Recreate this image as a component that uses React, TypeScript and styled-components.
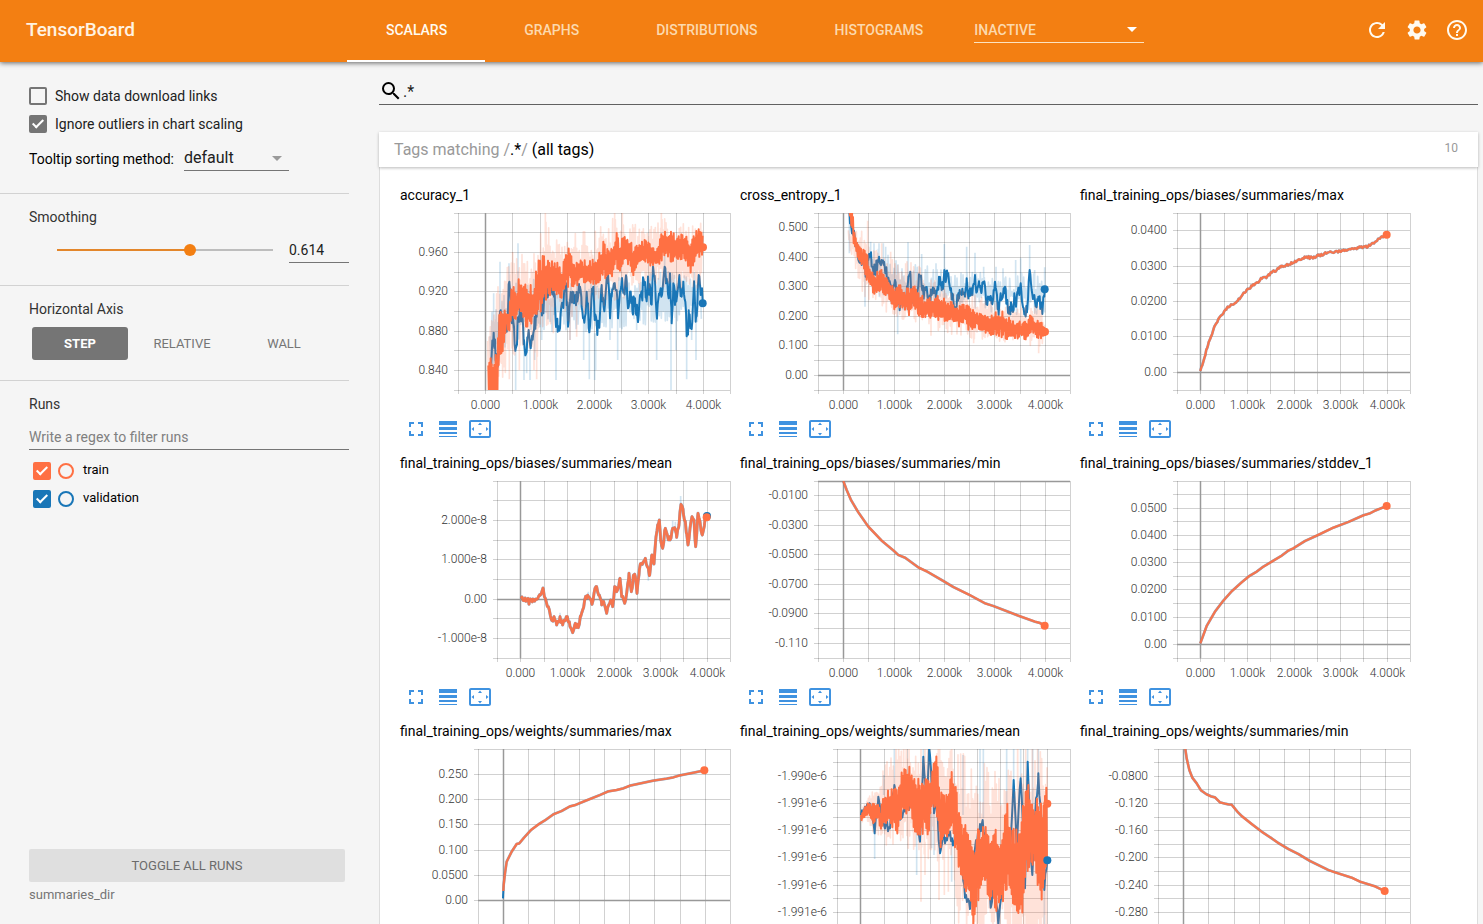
import React, { useId, useState } from 'react';
import styled, { createGlobalStyle, css } from 'styled-components';
import {
  MdFullscreen,
  MdHelpOutline,
  MdLineWeight,
  MdRefresh,
  MdSearch,
  MdSettings,
  MdSettingsOverscan,
} from 'react-icons/md';

const ORANGE = '#f37f12';
const TRAIN = '#ff7043';
const VALIDATION = '#1976b7';

const GlobalStyle = createGlobalStyle`
  *, *::before, *::after { box-sizing: border-box; }
  body {
    margin: 0;
    background: #f5f5f5;
    color: #000;
    font-family: Roboto, "Liberation Sans", sans-serif;
    font-size: 14px;
    line-height: 20px;
  }
  button, input, select { font: inherit; color: inherit; }
`;

/* ---------- page frame ---------- */

const Page = styled.div`
  display: flex;
  flex-direction: column;
  height: 100vh;
`;

const Header = styled.header`
  position: relative;
  z-index: 1;
  display: flex;
  flex: none;
  align-items: center;
  height: 62px;
  padding-right: 6px;
  background: ${ORANGE};
  color: #fff;
  box-shadow: 0 1px 5px rgba(0, 0, 0, 0.6);
  & > :not(nav) { margin-bottom: 2px; }
`;

const Brand = styled.h1`
  flex: none;
  width: 347px;
  margin: 0;
  padding-left: 26px;
  font-size: 19px;
  font-weight: 500;
  line-height: 24px;
  color: #fff3e2;
`;

const Tabs = styled.nav`
  display: flex;
  height: 100%;
`;

const Tab = styled.a<{ $active?: boolean }>`
  display: flex;
  align-items: center;
  padding: 0 38px 0 39px;
  border-bottom: 2px solid ${(p) => (p.$active ? '#fff' : 'transparent')};
  color: ${(p) => (p.$active ? '#fffaf0' : '#fcd9ae')};
  font-weight: 500;
  text-decoration: none;
  text-transform: uppercase;
`;

const SelectWrap = styled.span`
  position: relative;
  display: inline-flex;
  &::after {
    content: '';
    position: absolute;
    right: 7px;
    top: 50%;
    margin-top: -3px;
    border: 5px solid transparent;
    border-top-color: currentColor;
    border-bottom: 0;
    pointer-events: none;
  }
`;

const InactiveWrap = styled(SelectWrap)`
  margin-left: 13px;
  width: 170px;
`;

const InactiveSelect = styled.select`
  appearance: none;
  width: 100%;
  height: 25px;
  padding: 0;
  border: 0;
  border-bottom: 1px solid #fce3c0;
  border-radius: 0;
  background: transparent;
  color: #fcd9ae;
  font-weight: 500;
`;

const HeaderActions = styled.div`
  display: flex;
  margin-left: auto;
`;

const HeaderButton = styled.button`
  display: flex;
  align-items: center;
  justify-content: center;
  width: 40px;
  height: 40px;
  padding: 0;
  border: 0;
  background: transparent;
  color: #fffaf0;
  font-size: 24px;
`;

const Content = styled.div`
  display: flex;
  flex: 1;
  min-height: 0;
`;

/* ---------- sidebar ---------- */

const Sidebar = styled.aside`
  display: flex;
  flex: none;
  flex-direction: column;
  width: 349px;
  padding-top: 20px;
`;

const Section = styled.section<{ $height?: number }>`
  display: flex;
  flex-direction: column;
  height: ${(p) => (p.$height ? `${p.$height}px` : 'auto')};
  padding-left: 29px;
  ${(p) => p.$height && css`border-bottom: 1px solid #d2d2d2;`}
`;

const SectionTitle = styled.h2`
  margin: 0;
  padding-top: 13px;
  font-size: 14px;
  font-weight: 400;
  line-height: 20px;
  color: #333;
`;

const CheckRow = styled.label`
  display: flex;
  align-items: center;
  gap: 8px;
  height: 28px;
  color: #212121;
`;

const Checkbox = styled.input.attrs({ type: 'checkbox' })<{ $color: string }>`
  appearance: none;
  position: relative;
  flex: none;
  width: 18px;
  height: 18px;
  margin: 0;
  border: 2px solid ${(p) => p.$color};
  border-radius: 2px;
  &:checked { background: ${(p) => p.$color}; }
  &:checked::after {
    content: '';
    position: absolute;
    left: 4px;
    top: 0;
    width: 6px;
    height: 11px;
    border: solid #fff;
    border-width: 0 2px 2px 0;
    transform: rotate(45deg);
  }
`;

const SortRow = styled.div`
  display: flex;
  align-items: center;
  gap: 10px;
  margin-top: 8px;
`;

const SortWrap = styled(SelectWrap)`
  width: 105px;
  &::after { border-top-color: #9a9a9a; }
`;

const SortSelect = styled.select`
  appearance: none;
  width: 100%;
  height: 25px;
  padding: 0;
  border: 0;
  border-bottom: 1px solid #757575;
  border-radius: 0;
  background: transparent;
  color: #212121;
  font-size: 16px;
`;

const SliderRow = styled.div`
  display: flex;
  align-items: center;
  gap: 10px;
  margin-top: 11px;
  padding-left: 22px;
`;

const Slider = styled.input.attrs({ type: 'range' })<{ $percent: number }>`
  appearance: none;
  width: 228px;
  height: 12px;
  margin: 0 0 2px;
  background: transparent;
  &::-webkit-slider-runnable-track {
    height: 12px;
    background: linear-gradient(
        to right,
        #e3862b ${(p) => p.$percent}%,
        #bdbdbd ${(p) => p.$percent}%
      )
      center / calc(100% - 12px) 2px no-repeat;
  }
  &::-webkit-slider-thumb {
    appearance: none;
    width: 12px;
    height: 12px;
    border-radius: 50%;
    background: ${ORANGE};
  }
`;

const SliderValue = styled.input.attrs({ type: 'number' })`
  appearance: textfield;
  width: 60px;
  height: 25px;
  padding: 0;
  border: 0;
  border-bottom: 1px solid #757575;
  background: transparent;
  color: #212121;
  &::-webkit-inner-spin-button { appearance: none; }
`;

const AxisButtons = styled.div`
  display: grid;
  grid-template-columns: repeat(3, 96px);
  gap: 6px;
  margin-top: 8px;
  padding-left: 3px;
`;

const AxisButton = styled.button<{ $active?: boolean }>`
  height: 33px;
  padding: 0;
  border: 0;
  border-radius: 3px;
  background: ${(p) => (p.$active ? '#757575' : 'transparent')};
  color: ${(p) => (p.$active ? '#fff' : '#757575')};
  font-size: 13px;
  font-weight: ${(p) => (p.$active ? 700 : 400)};
`;

const RegexInput = styled.input`
  width: 100%;
  height: 25px;
  margin-top: 11px;
  padding: 0;
  border: 0;
  border-bottom: 1px solid #757575;
  background: transparent;
  &::placeholder { color: #808080; opacity: 1; }
`;

const RunList = styled.ul`
  margin: 7px 0 0;
  padding: 0 0 0 4px;
  list-style: none;
`;

const RunRow = styled.li`
  display: flex;
  align-items: center;
  height: 28px;
`;

const RunRadio = styled.input.attrs({ type: 'radio' })<{ $color: string }>`
  appearance: none;
  width: 16px;
  height: 16px;
  margin: 0 9px 0 7px;
  border: 2px solid ${(p) => p.$color};
  border-radius: 50%;
`;

const RunName = styled.label`
  padding-bottom: 2px;
  font-size: 13px;
`;

const SidebarFooter = styled.div`
  display: flex;
  flex-direction: column;
  gap: 3px;
  margin-top: auto;
  padding: 0 4px 19px 29px;
  color: #757575;
  font-size: 13px;
`;

const ToggleButton = styled.button`
  height: 33px;
  border: 0;
  border-radius: 2px;
  background: #dfdfdf;
  color: #6b6b6b;
`;

/* ---------- main pane ---------- */

const Main = styled.main`
  display: flex;
  flex: 1;
  flex-direction: column;
  min-width: 0;
  padding: 16px 5px 0 30px;
  overflow-y: auto;
  scrollbar-width: none;
`;

const SearchBar = styled.label`
  display: flex;
  flex: none;
  align-items: center;
  height: 27px;
  border-bottom: 1px solid #616161;
  font-size: 24px;
`;

const SearchInput = styled.input`
  flex: 1;
  min-width: 0;
  height: 24px;
  padding: 0;
  border: 0;
  background: transparent;
  color: #212121;
  font-size: 16px;
`;

const PaneHeader = styled.header`
  position: relative;
  display: flex;
  flex: none;
  justify-content: space-between;
  height: 35px;
  margin-top: 27px;
  padding: 8px 20px 0 15px;
  background: #fff;
  box-shadow: 0 1px 3px rgba(0, 0, 0, 0.28);
`;

const PaneTitle = styled.h2`
  margin: 0;
  font-size: 16px;
  font-weight: 400;
  line-height: 20px;
`;

const Muted = styled.span`
  color: #999;
`;

const PaneCount = styled.span`
  font-size: 12px;
  line-height: 16px;
  color: #999;
`;

const CardGrid = styled.div`
  display: flex;
  flex: 1 0 auto;
  flex-wrap: wrap;
  gap: 12px 10px;
  padding: 18px 19px 20px 20px;
  border: solid #ddd;
  border-width: 0 1px;
  background: #fff;
`;

const Card = styled.article`
  width: 330px;
`;

const CardTitle = styled.h3`
  margin: 0 0 8px;
  font-size: 14px;
  font-weight: 400;
  line-height: 20px;
  white-space: nowrap;
`;

const Plot = styled.svg`
  display: block;
  width: 330px;
  height: 204px;
  overflow: visible;
  text {
    font-size: 12px;
    font-weight: 300;
    fill: #333;
  }
`;

const CardTools = styled.div`
  display: flex;
  gap: 8px;
  padding-left: 4px;
`;

const CardTool = styled.button`
  display: flex;
  width: 24px;
  height: 24px;
  padding: 0;
  border: 0;
  background: transparent;
  color: #3f92e0;
  font-size: 24px;
`;

/* ---------- chart data ---------- */

type Pt = [number, number];
type Envelope = [number, number, number];

interface Trace {
  color: string;
  path: string;
  width: number;
  opacity?: number;
}

interface ChartSpec {
  title: string;
  left: number;
  rows: number;
  zeroRow?: number;
  firstLabelRow: number;
  labelEvery?: number;
  labels: string[];
  origin: Pt;
  traces: Trace[];
  dots: { color: string; at: Pt }[];
}

const random = (seed: number) => () => {
  seed = (seed * 1664525 + 1013904223) % 4294967296;
  return seed / 4294967296;
};

const pairs = (s: string): Pt[] => s.trim().split(/\s+/).map((p) => p.split(',').map(Number) as Pt);
const triples = (s: string): Envelope[] =>
  s.trim().split(/\s+/).map((p) => p.split(',').map(Number) as Envelope);

const toPath = (pts: Pt[]) => 'M' + pts.map(([x, y]) => `${x.toFixed(1)} ${y.toFixed(1)}`).join('L');

/* Straight segments through the samples, roughened by `amp`. */
const line = (s: string, amp = 0, seed = 7, step = 3) => {
  const src = pairs(s);
  if (!amp) return toPath(src);
  const rnd = random(seed);
  const out: Pt[] = [src[0]];
  for (let i = 1; i < src.length; i++) {
    const [x0, y0] = src[i - 1];
    const [x1, y1] = src[i];
    for (let x = x0 + step; x < x1; x += step) {
      const t = (x - x0) / (x1 - x0);
      out.push([x, y0 + (y1 - y0) * t + (rnd() - 0.5) * 2 * amp]);
    }
    out.push(src[i]);
  }
  return toPath(out);
};

/* A noisy line that swings between an upper and a lower envelope. */
const swing = (s: string, seed: number, step = 2, floor = 0.25) => {
  const src = triples(s);
  const rnd = random(seed);
  const out: Pt[] = [];
  let up = false;
  for (let i = 1; i < src.length; i++) {
    const [x0, t0, b0] = src[i - 1];
    const [x1, t1, b1] = src[i];
    for (let x = x0; x < x1; x += step) {
      const k = (x - x0) / (x1 - x0);
      const top = t0 + (t1 - t0) * k;
      const bottom = b0 + (b1 - b0) * k;
      const reach = floor + (1 - floor) * rnd();
      up = !up;
      out.push([x, (top + bottom) / 2 + ((up ? -reach : reach) * (bottom - top)) / 2]);
    }
  }
  return toPath(out);
};

/* Separate vertical outliers: x, top, bottom. */
const spikes = (s: string) => triples(s).map(([x, a, b]) => `M${x} ${a}V${b}`).join('');

const raw = (color: string, path: string): Trace => ({ color, path, width: 5, opacity: 0.2 });
const smooth = (color: string, path: string): Trace => ({ color, path, width: 6 });

/* Both runs coincide: the train line covers the validation line. */
const joint = (path: string, width = 7): Trace[] => [
  { color: VALIDATION, path, width: width + 1, opacity: 0.55 },
  { color: TRAIN, path, width, opacity: 0.92 },
];

const charts: ChartSpec[] = [
  {
    title: 'accuracy_1',
    left: 58,
    rows: 9,
    firstLabelRow: 2,
    labels: ['0.960', '0.920', '0.880', '0.840'],
    origin: [30, 99],
    traces: [
      raw(VALIDATION, swing('300,400,600 330,330,520 380,290,480 450,290,460 600,300,460 760,280,440 937,270,430', 3, 3, 0.1) +
        spikes('311,340,460 330,245,400 357,250,400 384,190,330 377,500,630 402,440,600 410,500,580 420,480,600 434,400,540 455,400,480 498,420,600 540,420,480 581,420,540 598,440,598 614,460,600 617,460,570 660,400,480 683,400,540 740,400,450 800,400,540 843,420,630 858,400,510 890,440,598 905,420,480 918,400,540 790,220,290 824,200,270')),
      smooth(VALIDATION, line('298,600 303,560 311,458 318,540 323,560 330,395 340,420 350,455 358,305 364,420 372,440 377,506 386,410 395,400 402,480 410,516 416,450 422,505 432,450 440,410 446,340 452,350 460,400 467,330 475,340 485,330 492,350 500,430 503,455 508,452 512,400 518,370 524,320 528,310 534,440 540,365 548,335 556,345 563,360 570,320 575,380 583,428 590,335 598,457 604,360 610,320 614,420 622,465 630,400 635,315 641,380 646,350 654,282 658,350 660,415 665,350 672,310 680,330 684,415 690,335 696,294 702,335 710,305 714,385 722,335 727,390 735,355 742,408 748,370 755,345 761,300 768,350 775,310 783,372 790,268 797,355 801,416 808,345 814,350 820,300 824,260 828,310 832,305 836,355 840,280 845,430 850,310 855,375 862,340 868,285 875,350 880,305 886,365 890,469 897,410 903,443 908,390 913,320 918,412 926,285 932,345 936,325 939,370', 32, 11, 2)),
      raw(TRAIN, swing('293,430,630 310,340,630 330,300,630 360,190,600 390,220,500 440,215,560 460,100,480 500,180,400 540,130,440 600,160,400 640,130,380 680,99,370 720,130,340 780,140,330 810,99,320 850,130,330 900,130,330 937,130,330', 21, 2, 0.3) +
        spikes('358,440,598 388,420,570 432,430,570 440,430,598 490,380,460 540,350,480 560,350,470 466,99,200 674,99,200 697,99,180 814,99,160')),
      smooth(TRAIN, swing('295,520,680 298,510,680 305,530,680 315,500,680 322,490,680 326,400,590 340,388,520 350,395,440 358,385,465 365,315,430 380,320,430 388,280,410 400,285,425 410,300,460 430,320,420 438,265,415 450,225,405 470,230,355 490,240,350 505,230,365 515,280,375 522,210,330 540,186,320 550,250,335 570,240,305 600,240,320 620,235,320 640,185,300 660,210,305 680,158,260 690,190,300 700,150,250 720,175,260 730,205,292 750,185,245 775,175,255 790,195,260 800,205,265 815,145,245 830,160,225 843,140,250 860,175,245 875,148,240 890,165,250 905,180,285 922,145,220 930,150,240 940,170,215', 5, 2, 0.4)),
    ],
    dots: [
      { color: VALIDATION, at: [938, 370] },
      { color: TRAIN, at: [939, 202] },
    ],
  },
  {
    title: 'cross_entropy_1',
    left: 78,
    rows: 12,
    zeroRow: 11,
    firstLabelRow: 1,
    labels: ['0.500', '0.400', '0.300', '0.200', '0.100', '0.00'],
    origin: [15, 99],
    traces: [
      raw(VALIDATION, swing('400,200,330 450,200,370 520,250,400 600,260,390 700,270,390 800,280,400 930,280,410', 9, 3, 0.1) +
        spikes('343,100,220 407,185,260 390,280,380 417,190,250 432,190,250 445,190,250 452,200,270 488,380,463 519,187,290 560,222,300 603,250,300 628,192,290 695,200,300 720,218,300 746,260,320 783,260,320 804,265,320 842,240,320 857,235,310 884,195,300 899,270,320 929,262,330')),
      smooth(VALIDATION, line('343,90 345,130 355,165 364,190 372,245 385,230 392,290 400,240 406,225 412,260 420,270 430,245 440,240 447,245 452,270 458,300 470,340 480,300 486,340 495,380 505,340 512,365 520,290 526,275 530,350 540,350 548,330 552,283 556,290 560,320 567,345 573,330 580,360 590,345 597,325 603,355 608,320 613,300 620,330 626,300 628,270 634,295 640,280 646,330 655,360 663,385 670,340 680,345 690,350 695,295 700,355 705,325 712,345 720,285 726,335 733,320 740,335 746,310 752,345 757,375 763,350 770,370 776,330 780,305 786,345 791,405 797,340 804,345 810,320 815,370 822,395 830,375 836,390 838,340 843,380 848,340 853,345 857,310 862,370 870,400 877,380 884,270 890,330 898,345 903,370 910,350 918,375 923,385 928,350 929,328', 20, 13, 2)),
      raw(TRAIN, swing('340,130,200 360,150,260 380,150,330 398,160,370 420,210,380 440,200,390 460,220,400 500,240,420 540,250,440 600,290,450 700,340,475 800,370,490 880,380,495 910,370,515 930,400,490', 31, 2, 0.2) +
        spikes('398,122,260 440,190,280 467,215,300 512,250,320 588,400,467 716,440,490 911,460,520')),
      smooth(TRAIN, swing('343,80,110 352,85,150 358,150,210 372,200,250 385,205,260 398,225,320 410,262,340 425,275,355 440,260,345 455,285,345 470,300,380 480,315,390 500,315,395 520,325,410 535,310,375 550,335,405 565,350,425 580,350,420 600,345,415 625,350,430 650,365,430 670,370,445 690,375,425 700,375,455 720,390,445 740,400,450 760,410,465 780,395,465 800,385,475 820,410,478 840,420,475 860,425,480 875,425,480 885,395,455 900,415,470 920,420,482 932,440,475', 8, 2, 0.35)),
    ],
    dots: [
      { color: VALIDATION, at: [929, 328] },
      { color: TRAIN, at: [930, 455] },
    ],
  },
  {
    title: 'final_training_ops/biases/summaries/max',
    left: 97,
    rows: 10,
    zeroRow: 9,
    firstLabelRow: 1,
    labels: ['0.0400', '0.0300', '0.0200', '0.0100', '0.00'],
    origin: [15, 99],
    traces: joint(line('376,573 385,545 395,508 408,470 418,440 430,417 445,400 455,385 465,379 485,365 500,348 520,327 540,312 562,294 575,292 590,278 605,270 618,258 640,254 660,243 680,238 695,230 705,234 730,227 760,217 780,215 800,211 815,212 850,204 870,200 885,197 900,186 915,176 935,164', 4, 4)),
    dots: [{ color: TRAIN, at: [935, 164] }],
  },
  {
    title: 'final_training_ops/biases/summaries/mean',
    left: 97,
    rows: 9,
    zeroRow: 6,
    firstLabelRow: 2,
    labels: ['2.000e-8', '1.000e-8', '0.00', '-1.000e-8'],
    origin: [30, 93],
    traces: [
      raw(VALIDATION, spikes('510,488,510 595,425,440 775,360,392 848,212,240 856,215,240 872,138,170 880,170,200')),
      ...joint(line('393,446 405,444 418,456 428,447 440,448 450,436 460,418 466,445 475,470 486,512 492,500 500,525 510,500 518,525 526,512 532,500 540,530 548,548 556,520 565,533 572,500 578,480 584,450 594,438 606,463 612,430 620,410 628,435 635,465 642,460 650,490 656,465 662,450 668,470 674,410 680,425 690,385 695,440 704,460 710,430 717,370 724,425 731,375 736,380 741,430 748,360 754,340 760,335 766,325 772,350 779,375 786,315 792,342 798,260 803,225 808,210 812,270 818,295 826,235 832,255 840,270 848,235 856,240 860,262 867,225 873,163 880,190 886,215 890,250 894,285 900,235 906,200 912,210 917,290 924,190 930,215 937,255 945,208 950,200', 9, 6), 8),
    ],
    dots: [
      { color: VALIDATION, at: [951, 198] },
      { color: TRAIN, at: [950, 202] },
    ],
  },
  {
    title: 'final_training_ops/biases/summaries/min',
    left: 78,
    rows: 12,
    zeroRow: 0,
    firstLabelRow: 1,
    labels: ['-0.0100', '-0.0300', '-0.0500', '-0.0700', '-0.0900', '-0.110'],
    origin: [15, 93],
    traces: joint(line('325,93 335,120 348,150 370,187 400,230 440,272 476,302 490,315 510,323 550,352 575,364 625,393 655,411 700,433 750,460 775,468 850,497 900,515 915,519 929,527')),
    dots: [{ color: TRAIN, at: [929, 527] }],
  },
  {
    title: 'final_training_ops/biases/summaries/stddev_1',
    left: 97,
    rows: 13,
    zeroRow: 12,
    firstLabelRow: 2,
    labels: ['0.0500', '0.0400', '0.0300', '0.0200', '0.0100', '0.00'],
    origin: [15, 93],
    traces: joint(line('376,580 395,528 420,485 445,452 470,424 500,397 523,378 545,365 565,350 585,338 620,317 640,302 655,295 690,273 725,257 775,233 820,216 865,196 885,190 900,182 935,168')),
    dots: [{ color: TRAIN, at: [935, 168] }],
  },
  {
    title: 'final_training_ops/weights/summaries/max',
    left: 78,
    rows: 7,
    zeroRow: 6,
    firstLabelRow: 1,
    labelEvery: 1,
    labels: ['0.250', '0.200', '0.150', '0.100', '0.0500', '0.00'],
    origin: [30, 102],
    traces: [
      ...joint(line('340,528 341,510 345,475 350,440 365,410 380,387 388,385 402,368 423,345 447,327 465,316 490,298 515,288 540,274 556,270 580,260 605,250 630,240 655,229 680,225 700,220 720,212 790,197 830,191 850,187 870,181 915,172 943,166')),
      smooth(VALIDATION, 'M339 550L340 528'),
    ],
    dots: [{ color: TRAIN, at: [943, 166] }],
  },
  {
    title: 'final_training_ops/weights/summaries/mean',
    left: 97,
    rows: 13,
    firstLabelRow: 2,
    labels: ['-1.990e-6', '-1.991e-6', '-1.991e-6', '-1.991e-6', '-1.991e-6', '-1.991e-6'],
    origin: [15, 102],
    traces: [
      raw(VALIDATION, spikes('419,350,432 446,180,240 478,102,210 545,330,480 565,102,130 597,290,420 590,290,400 650,370,500 684,120,300 735,102,310 745,102,310 815,102,300 836,102,200 857,102,190 878,102,150 893,102,300 910,102,180 928,500,627')),
      smooth(VALIDATION, line('378,300 400,270 410,290 419,355 430,245 438,300 447,330 465,340 478,210 490,310 510,290 530,270 545,320 555,380 565,125 572,220 578,210 582,100 590,200 597,295 605,270 615,415 625,350 630,385 645,350 655,380 670,330 690,548 705,582 720,400 743,315 755,450 768,575 778,470 790,630 800,540 820,350 826,390 836,195 845,400 857,190 866,400 870,520 878,140 886,400 892,480 900,310 910,175 920,330 928,525 937,435', 20, 17)),
      raw(TRAIN, swing('380,285,320 400,235,320 430,225,390 450,130,400 475,110,400 500,80,380 540,80,420 600,80,440 655,80,450 665,100,640 720,140,700 820,140,700 850,60,800 937,60,800', 41, 2, 0.4) +
        spikes('558,380,560 570,380,480 612,380,555 628,380,540 640,370,530')),
      smooth(TRAIN, swing('378,295,320 390,275,305 400,258,305 415,265,325 430,270,305 436,280,360 447,240,330 460,225,330 475,210,345 490,230,360 500,145,310 515,165,310 528,145,305 540,195,360 555,185,380 570,180,340 580,190,380 590,170,290 600,95,290 608,150,340 617,230,405 630,240,360 640,235,380 650,160,350 663,210,420 672,280,460 683,310,540 700,350,545 715,380,630 730,325,560 750,320,530 765,370,560 780,340,590 800,360,590 815,220,540 830,350,570 850,310,650 860,260,640 870,180,510 885,220,450 900,290,460 910,210,530 920,250,590 932,205,500 938,230,460', 15, 2, 0.5)),
    ],
    dots: [
      { color: VALIDATION, at: [937, 436] },
      { color: TRAIN, at: [937, 266] },
    ],
  },
  {
    title: 'final_training_ops/weights/summaries/min',
    left: 78,
    rows: 13,
    firstLabelRow: 2,
    labels: ['-0.0800', '-0.120', '-0.160', '-0.200', '-0.240', '-0.280'],
    origin: [15, 102],
    traces: joint(line('330,95 335,130 343,165 352,188 365,205 378,226 395,238 408,244 420,247 435,262 450,266 460,268 470,269 488,291 500,303 530,327 560,350 590,370 610,384 640,402 670,417 705,438 760,465 780,472 830,488 855,500 900,514 929,528')),
    dots: [{ color: TRAIN, at: [929, 528] }],
  },
];

const PLOT_RIGHT = 330;
const PLOT_HEIGHT = 177;
const X_LABELS = ['0.000', '1.000k', '2.000k', '3.000k', '4.000k'];

function Chart({ spec }: { spec: ChartSpec }) {
  const clip = useId();
  const colStep = (PLOT_RIGHT - spec.left) / 10;
  const rowStep = PLOT_HEIGHT / spec.rows;
  const labelEvery = spec.labelEvery ?? 2;
  const colX = (i: number) => Math.round(spec.left + i * colStep) + 0.5;
  const rowY = (i: number) => Math.floor(i * rowStep) + 0.5;
  const cols = Array.from({ length: 11 }, (_, i) => i);
  const rows = Array.from({ length: spec.rows + 1 }, (_, i) => i);
  const place = `scale(${1 / 3}) translate(${-spec.origin[0]} ${-spec.origin[1]})`;

  return (
    <Plot viewBox="0 0 330 204" role="img" aria-label={spec.title}>
      <clipPath id={clip}>
        <rect x={spec.left} y="0" width={PLOT_RIGHT - spec.left} height={PLOT_HEIGHT} />
      </clipPath>
      <g stroke="#000" strokeOpacity="0.18">
        {cols.map((i) => (
          <path key={i} d={`M${colX(i)} 0V${PLOT_HEIGHT + 4}`} />
        ))}
        {rows.map((i) => (
          <path key={i} d={`M${spec.left - 4} ${rowY(i)}H${PLOT_RIGHT}`} />
        ))}
      </g>
      <g stroke="#999" strokeWidth="1.5">
        <path d={`M${colX(1)} 0V${PLOT_HEIGHT}`} />
        {spec.zeroRow !== undefined && <path d={`M${spec.left} ${rowY(spec.zeroRow)}H${PLOT_RIGHT}`} />}
      </g>
      <g clipPath={`url(#${clip})`}>
        <g transform={place} fill="none" strokeLinejoin="round">
          {spec.traces.map((t, i) => (
            <path key={i} d={t.path} stroke={t.color} strokeWidth={t.width} opacity={t.opacity} />
          ))}
        </g>
      </g>
      <g transform={place}>
        {spec.dots.map((d, i) => (
          <circle key={i} cx={d.at[0]} cy={d.at[1]} r="12" fill={d.color} />
        ))}
      </g>
      {spec.labels.map((label, i) => (
        <text key={i} x={spec.left - 10} y={Math.floor(rowY(spec.firstLabelRow + i * labelEvery)) + 4} textAnchor="end">
          {label}
        </text>
      ))}
      {X_LABELS.map((label, i) => (
        <text key={i} x={colX(1 + i * 2)} y={196} textAnchor="middle">
          {label}
        </text>
      ))}
    </Plot>
  );
}

function ChartCard({ spec }: { spec: ChartSpec }) {
  return (
    <Card>
      <CardTitle>{spec.title}</CardTitle>
      <Chart spec={spec} />
      <CardTools>
        <CardTool aria-label="Toggle full size"><MdFullscreen /></CardTool>
        <CardTool aria-label="Toggle log scale"><MdLineWeight /></CardTool>
        <CardTool aria-label="Fit domain to data"><MdSettingsOverscan /></CardTool>
      </CardTools>
    </Card>
  );
}

const runs = [
  { name: 'train', color: TRAIN },
  { name: 'validation', color: VALIDATION },
];

export default function App() {
  const [smoothing, setSmoothing] = useState(0.614);
  const [axis, setAxis] = useState('STEP');

  return (
    <Page>
      <GlobalStyle />
      <Header>
        <Brand>TensorBoard</Brand>
        <Tabs>
          <Tab href="#scalars" $active>Scalars</Tab>
          <Tab href="#graphs">Graphs</Tab>
          <Tab href="#distributions">Distributions</Tab>
          <Tab href="#histograms">Histograms</Tab>
        </Tabs>
        <InactiveWrap>
          <InactiveSelect aria-label="Inactive dashboards">
            <option>INACTIVE</option>
          </InactiveSelect>
        </InactiveWrap>
        <HeaderActions>
          <HeaderButton aria-label="Reload"><MdRefresh /></HeaderButton>
          <HeaderButton aria-label="Settings"><MdSettings /></HeaderButton>
          <HeaderButton aria-label="Help"><MdHelpOutline /></HeaderButton>
        </HeaderActions>
      </Header>
      <Content>
        <Sidebar>
          <Section $height={112}>
            <CheckRow>
              <Checkbox $color="#757575" />
              Show data download links
            </CheckRow>
            <CheckRow>
              <Checkbox $color="#757575" defaultChecked />
              Ignore outliers in chart scaling
            </CheckRow>
            <SortRow>
              <label htmlFor="sorting">Tooltip sorting method:</label>
              <SortWrap>
                <SortSelect id="sorting">
                  <option>default</option>
                </SortSelect>
              </SortWrap>
            </SortRow>
          </Section>
          <Section $height={92}>
            <SectionTitle id="smoothing">Smoothing</SectionTitle>
            <SliderRow>
              <Slider
                aria-labelledby="smoothing"
                min={0}
                max={1}
                step={0.001}
                value={smoothing}
                $percent={smoothing * 100}
                onChange={(e) => setSmoothing(Number(e.target.value))}
              />
              <SliderValue
                aria-labelledby="smoothing"
                step={0.001}
                value={smoothing}
                onChange={(e) => setSmoothing(Number(e.target.value))}
              />
            </SliderRow>
          </Section>
          <Section $height={95}>
            <SectionTitle>Horizontal Axis</SectionTitle>
            <AxisButtons>
              {['STEP', 'RELATIVE', 'WALL'].map((name) => (
                <AxisButton key={name} $active={axis === name} onClick={() => setAxis(name)}>
                  {name}
                </AxisButton>
              ))}
            </AxisButtons>
          </Section>
          <Section>
            <SectionTitle>Runs</SectionTitle>
            <RegexInput aria-label="Filter runs" placeholder="Write a regex to filter runs" />
            <RunList>
              {runs.map((run) => (
                <RunRow key={run.name}>
                  <Checkbox id={`run-${run.name}`} $color={run.color} defaultChecked />
                  <RunRadio name="only" aria-label={`Show only ${run.name}`} $color={run.color} />
                  <RunName htmlFor={`run-${run.name}`}>{run.name}</RunName>
                </RunRow>
              ))}
            </RunList>
          </Section>
          <SidebarFooter>
            <ToggleButton>TOGGLE ALL RUNS</ToggleButton>
            <span>summaries_dir</span>
          </SidebarFooter>
        </Sidebar>
        <Main>
          <SearchBar>
            <MdSearch aria-hidden />
            <SearchInput aria-label="Filter tags" defaultValue=".*" />
          </SearchBar>
          <PaneHeader>
            <PaneTitle>
              <Muted>Tags matching /</Muted>.*<Muted>/</Muted> (all tags)
            </PaneTitle>
            <PaneCount>10</PaneCount>
          </PaneHeader>
          <CardGrid>
            {charts.map((spec) => (
              <ChartCard key={spec.title} spec={spec} />
            ))}
          </CardGrid>
        </Main>
      </Content>
    </Page>
  );
}
